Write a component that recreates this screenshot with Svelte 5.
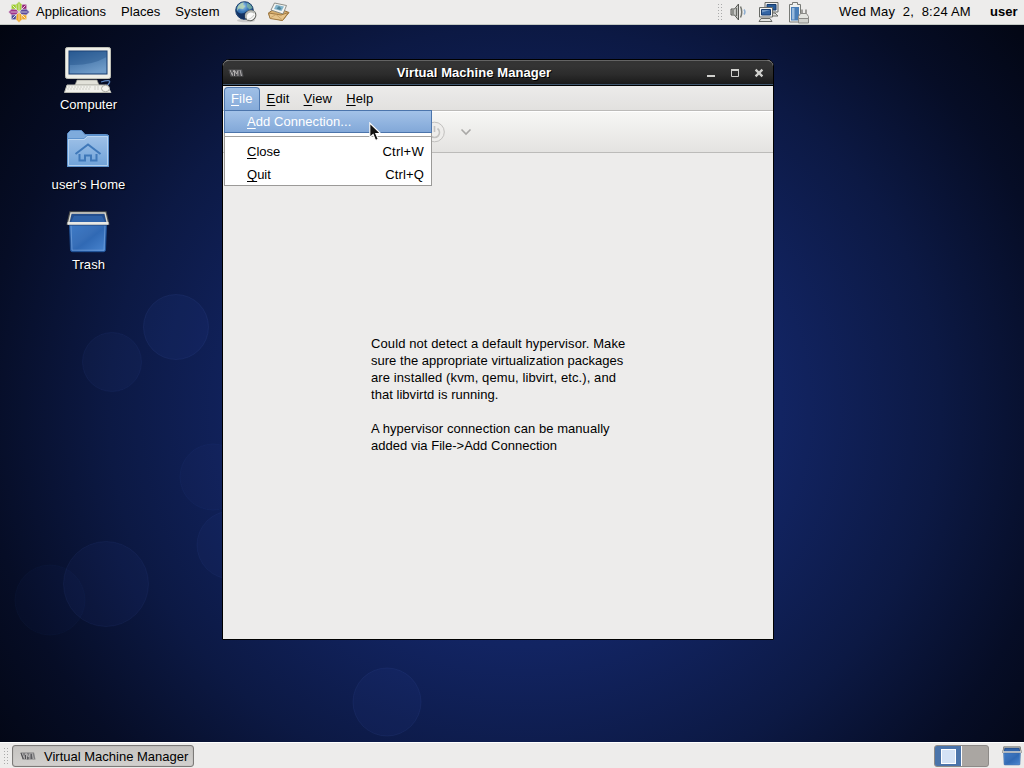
<script>
  const message = [
    { text: 'Could not detect a default hypervisor. Make', ls: 0.1 },
    { text: 'sure the appropriate virtualization packages', ls: 0.02 },
    { text: 'are installed (kvm, qemu, libvirt, etc.), and', ls: 0.1 },
    { text: 'that libvirtd is running.', ls: 0.04 },
    { text: '', ls: 0 },
    { text: 'A hypervisor connection can be manually', ls: 0.06 },
    { text: 'added via File->Add Connection', ls: 0.02 }
  ];
  const items = [
    { key: 'C', rest: 'lose', accel: 'Ctrl+W', ls: 0.25 },
    { key: 'Q', rest: 'uit', accel: 'Ctrl+Q', ls: 0.15 }
  ];
  const bokeh = [
    [176, 327, 32.5, 0.1], [112, 362, 29.5, 0.07], [213, 477, 33, 0.05], [231, 545, 34, 0.07],
    [106, 584, 42.5, 0.08], [50, 600, 35, 0.04], [387, 702, 34, 0.09]
  ];
  const petals = [0, 90, 180, 270];
  const petalColors = ['#a3cf3a', '#5a4a9c', '#efa724', '#a0348c'];
  const cornerColors = ['#932279', '#efa724', '#4b4a98', '#9ccd2a'];
</script>

{#snippet vmIcon()}
  <svg class="vm" width="16" height="10" viewBox="0 0 16 10">
    <path d="M.5 1.500H14L15.500 8.500H2.500Z" fill="#66666a" opacity=".75" />
    <path d="M2 2L4.300 7.500L6 2M6.500 8V2.500L8.800 6L10 2.500V8M12 2L13.500 8" fill="none" stroke="#b2b0b0" stroke-width="1" />
    <path d="M1 2L3.300 8M5.500 4V8M7.800 6V8.500M11.200 3V8" stroke="#4c4c50" stroke-width="1" />
  </svg>
{/snippet}

{#snippet trashIcon(w, h)}
  <svg width={w} height={h} viewBox="0 0 44 42">
    <path d="M3.500 12H40.500L39.500 39Q39.400 40.700 37.500 40.700H6.500Q4.600 40.700 4.500 39Z" fill="url(#bin)" stroke="#1f5196" />
    <path d="M5 14H39L38 39.200H6Z" fill="none" stroke="#7eaae0" stroke-width=".9" opacity=".65" />
    <path d="M4.500 1.500H39.500L42 12.500H2Z" fill="#254f8e" stroke="#4f504e" stroke-width="2.600" />
    <path d="M5 11L8 5H36L39 11Z" fill="#2f62a8" />
    <path d="M5 2H39L41.500 12.500H2.500Z" fill="none" stroke="#d9d9d4" stroke-width="1.400" />
    <path d="M1.500 12.300H42.500" stroke="#e9e9e5" stroke-width="2.800" />
    <path d="M3.500 14.400H40.500" stroke="#1c4580" stroke-width="1" opacity=".7" />
  </svg>
{/snippet}

<svg class="defs" width="0" height="0">
  <defs>
    <linearGradient id="bin" x1="0" y1="0" x2="1" y2="1">
      <stop offset="0" stop-color="#3f7cc8" /><stop offset=".45" stop-color="#386fb8" /><stop offset=".55" stop-color="#3069b4" /><stop offset="1" stop-color="#4a86d0" />
    </linearGradient>
    <linearGradient id="lcd" x1="0" y1="0" x2=".5" y2="1">
      <stop offset="0" stop-color="#2c5f98" /><stop offset="1" stop-color="#6f9bc8" />
    </linearGradient>
    <linearGradient id="folder" x1="0" y1="0" x2="0" y2="1">
      <stop offset="0" stop-color="#a0c2e8" /><stop offset="1" stop-color="#6fa2d8" />
    </linearGradient>
    <radialGradient id="globe" cx=".4" cy=".25" r=".8">
      <stop offset="0" stop-color="#a9d3f6" /><stop offset=".4" stop-color="#3b79b9" /><stop offset="1" stop-color="#102f63" />
    </radialGradient>
  </defs>
</svg>

<div class="screen">
  <header class="panel top">
    <svg class="distro" width="22" height="22" viewBox="-11 -11 22 22">
      {#each petals as a, i}
        <g transform="rotate({a})">
          <path d="M1.600 -7.400H7.400V-1.600H1.600Z" fill={cornerColors[i]} />
          <path d="M2 -2L6.500 -6.500" stroke="#f2efe9" stroke-width=".9" />
        </g>
      {/each}
      {#each petals as a, i}
        <g transform="rotate({a})">
          <path d="M0 -10.500L3 -7.500L2.500 -2.500L0 -.3L-2.500 -2.500L-3 -7.500Z" fill={petalColors[i]} stroke="#edeceb" stroke-width=".6" />
          <path d="M0 -8.500V-1" stroke="#f2efe9" stroke-width=".7" />
        </g>
      {/each}
    </svg>
    <nav class="menus"><span>Applications</span><span>Places</span><span class="sys">System</span></nav>
    <svg class="browser" width="24" height="24" viewBox="0 0 24 24">
      <ellipse cx="12" cy="20.500" rx="9" ry="1.800" fill="#888" opacity=".35" />
      <circle cx="10.500" cy="10.500" r="8.800" fill="url(#globe)" stroke="#163a68" />
      <path d="M3.500 7Q6 2.500 10 2.500L9 5L11.500 6L9 9L5 8.500L3 11Z" fill="#b9d6b0" opacity=".85" />
      <path d="M13 3Q17 4 18.500 8L15.500 9.500L13 7Z" fill="#7db4a2" opacity=".8" />
      <path d="M1.500 9Q6 17 13 11L10 19.500Q3.500 18 1.500 9Z" fill="#102a58" opacity=".85" />
      <ellipse cx="16.500" cy="15.500" rx="5.500" ry="5" fill="#fafafa" stroke="#5d5f5b" stroke-width="1" transform="rotate(-35 16.500 15.500)" />
      <path d="M12 18Q11 13 16 11.500Q19 11 20.500 13" fill="none" stroke="#b5b7b3" stroke-width="2" />
      <path d="M13 19.500Q17 19.500 20 15" fill="none" stroke="#cfd0cd" stroke-width="1.200" />
    </svg>
    <svg class="mail" width="24" height="22" viewBox="0 0 24 22">
      <path d="M1.500 12L9 6.500L22 11.500L15.500 19.500L3 16.500Z" fill="#d6ad6e" stroke="#94703c" />
      <path d="M7.500 2L19.500 4.500L16 13L4 9Z" fill="#f4f5f2" stroke="#81837e" stroke-width=".9" />
      <path d="M9 3.800L17 5.500L14.500 10L7 8Z" fill="#83b4cc" />
      <path d="M9.500 7.500L12 5L14.500 7.500L13 9Z" fill="#4f8398" />
      <path d="M1.500 12L14 14L21.500 11.500L15.500 19.500L3 17.500Z" fill="#e6c48b" stroke="#a07a42" />
      <path d="M3 17L9 13.500L15.500 19" fill="none" stroke="#c49c60" stroke-width=".8" />
    </svg>
    <div class="tray">
      <i class="grip"></i>
      <svg class="sound" width="17" height="20" viewBox="0 0 17 20">
        <path d="M1 7H4.500L8.500 2V18L4.500 13H1Z" fill="#c8c9c6" stroke="#555753" />
        <path d="M3 8V12M6.500 6V14" stroke="#686a66" stroke-width="1.200" />
        <path d="M10.500 4.500Q13 10 10.500 15.500" fill="none" stroke="#74766f" stroke-width="1.500" />
        <path d="M14 7.500Q16 10 14 12.500" fill="none" stroke="#8eaed0" stroke-width="1.400" />
      </svg>
      <svg class="net" width="22" height="22" viewBox="0 0 22 22">
        <g stroke="#686a66"><path d="M7 1.500H20V11H7Z" fill="#eee" /><path d="M10 15L12 12H17L20 15Z" fill="#ddd" /></g>
        <path d="M9 3.500H18V9H9Z" fill="#285b98" stroke="#143b6c" />
        <g stroke="#686a66"><path d="M1.500 6.500H14.500V16H1.500Z" fill="#f2f2ef" /><path d="M1 20.500L3 17.500H12L14 20.500Z" fill="#e6e6e3" /></g>
        <path d="M3.500 8.500H12.500V14H3.500Z" fill="#3465a4" stroke="#173d72" /><path d="M4 9H12L4 11.500Z" fill="#7198c6" />
      </svg>
      <svg class="battery" width="22" height="23" viewBox="0 0 22 23">
        <path d="M1.500 3.500H4.500V1.500H9.500V3.500H12.500V21H1.500Z" fill="#eef0ef" stroke="#787a76" />
        <path d="M3 6H11V19.500H3Z" fill="#497eb7" /><path d="M4 7H6.500V18.500H4Z" fill="#99bbdd" />
        <path d="M14 8.500V13M18 8.500V13" stroke="#8a8a87" stroke-width="1.600" />
        <path d="M10.500 19V15.500L12.500 12.500H18.500L20.500 15.500V19Z" fill="#e3e4e0" stroke="#8a8a87" />
        <path d="M10.500 17.500H20.500V22H10.500Z" fill="#cfd0cc" stroke="#8a8a87" />
      </svg>
      <time>Wed May&nbsp; 2,&nbsp; 8:24 AM</time>
      <b>user</b>
    </div>
  </header>

  <main class="desktop">
    <svg class="lights" width="1024" height="718" viewBox="0 25 1024 718">
      {#each bokeh as [x, y, r, o]}
        <circle cx={x} cy={y} r={r} fill="#3450b0" fill-opacity={o} stroke="#5878ce" stroke-opacity={o} />
      {/each}
    </svg>
    <div class="shortcuts">
      <div class="shortcut">
        <svg width="50" height="48" viewBox="0 0 50 48">
          <path d="M38 36Q48 33 46.500 36.500T41 41" fill="none" stroke="#5e87bf" stroke-width="1.300" />
          <path d="M14 34H34L36 39H12Z" fill="#e2e2da" stroke="#92938a" stroke-width=".7" />
          <rect x="2.500" y="1.500" width="45" height="31" rx="1.800" fill="#efefe9" stroke="#bfc0b7" />
          <rect x="6" y="5" width="38" height="23" fill="url(#lcd)" stroke="#173b6f" />
          <path d="M6.500 19Q28 20 43.500 11V5.500H6.500Z" fill="#204f86" opacity=".4" />
          <path d="M4 39H44L48 46.500H1.500Z" fill="#f1f1ec" stroke="#babbb2" />
          <path d="M5 41H28M4 43H28M31 41H36M31 43H37" stroke="#cfd0c8" stroke-width="1.200" stroke-dasharray="2 1" />
          <ellipse cx="42.500" cy="42.500" rx="4" ry="3.200" fill="#f5f5f0" stroke="#adaea6" />
        </svg>
        <span>Computer</span>
      </div>
      <div class="shortcut home">
        <svg width="50" height="48" viewBox="0 0 50 48">
          <path d="M4.500 11V7.500L7.500 4.500H18.500L22 8.500H43.500Q45.500 8.500 45.500 10.500V40.500H4.500Z" fill="#7eabdc" stroke="#5d8fc9" />
          <path d="M4.500 12.500H21L24 9.500H45.500V40.500H4.500Z" fill="url(#folder)" stroke="#5d92cd" />
          <path d="M5.500 13.500H21.500L24.500 10.500H44.500V39.500H5.500Z" fill="none" stroke="#c3daf2" stroke-width=".8" />
          <path d="M12.500 28L25 18.500L37.500 28M16.500 28V34.500H22V29.500H28V34.500H33.500V28" fill="none" stroke="#3f78b9" stroke-width="2" />
        </svg>
        <span>user's Home</span>
      </div>
      <div class="shortcut trash">
        {@render trashIcon(44, 42)}
        <span>Trash</span>
      </div>
    </div>

    <section class="window">
      <div class="title">
        {@render vmIcon()}
        <h1>Virtual Machine Manager</h1>
        <svg class="controls" width="60" height="12" viewBox="0 0 60 12">
          <path d="M2 9H10" stroke="#d0d0cd" stroke-width="2" />
          <path d="M26.500 3.500H33.500V9.500H26.500Z" fill="none" stroke="#d0d0cd" /><path d="M26 3H34" stroke="#d0d0cd" stroke-width="2" />
          <path d="M50.600 2.600L57.400 9.400M57.400 2.600L50.600 9.400" stroke="#d0d0cd" stroke-width="2.300" />
        </svg>
      </div>
      <nav class="menubar">
        <span class="open"><u>F</u>ile</span><span><u>E</u>dit</span><span><u>V</u>iew</span><span><u>H</u>elp</span>
      </nav>
      <div class="toolbar">
        <svg width="60" height="24" viewBox="0 0 60 24">
          <circle cx="12.500" cy="12" r="9.800" fill="#eeedeb" stroke="#c1c0be" />
          <path d="M9.500 8.500A5 5 0 1 0 15.500 8.500M12.500 6V12" fill="none" stroke="#c4c3c1" stroke-width="1.600" />
          <path d="M39.500 9.500L44 14L48.500 9.500" fill="none" stroke="#a9a8a6" stroke-width="1.600" />
        </svg>
      </div>
      <div class="content">
        <p>
          {#each message as line}<span style="letter-spacing:{line.ls}px">{line.text}</span>{/each}
        </p>
      </div>
      <div class="dropdown">
        <div class="item active"><span><u>A</u>dd Connection...</span></div>
        <hr />
        {#each items as it}
          <div class="item"><span><u>{it.key}</u>{it.rest}</span><span style="letter-spacing:{it.ls}px">{it.accel}</span></div>
        {/each}
      </div>
      <svg class="cursor" width="14" height="20" viewBox="0 0 14 20">
        <path d="M.8 1V15.500L4.100 12.400L6.500 18.500L9.300 17.300L6.800 11.500H11.600Z" fill="#111" stroke="#fff" stroke-width="1.100" />
      </svg>
    </section>
  </main>

  <footer class="panel bottom">
    <i class="grip"></i>
    <div class="task">{@render vmIcon()}<span>Virtual Machine Manager</span></div>
    <div class="pager"><div class="ws on"><i></i></div><div class="ws"></div></div>
    {@render trashIcon(20, 20)}
  </footer>
</div>

<style>
  :global(body) { overflow: hidden; }
  .defs { position: absolute; }
  .screen { width: 1024px; height: 768px; display: grid; grid-template-rows: 25px 717px 26px; font: 13px/17px "Liberation Sans", Arial, sans-serif; color: #000; overflow: hidden; }
  svg { display: block; flex: none; }
  .panel { display: flex; align-items: center; background: #edeceb; box-sizing: border-box; }
  .top { border-bottom: 1px solid #c4c9c4; padding-left: 8px; }
  .menus { display: flex; gap: 15px; margin-left: 6px; padding-bottom: 2px; }
  .sys { letter-spacing: .2px; }
  .browser { margin-left: 14px; }
  .mail { margin-left: 9px; }
  .tray { margin-left: auto; display: flex; align-items: center; }
  .grip { width: 7px; height: 18px; background: radial-gradient(circle, #aaa 0 .6px, transparent .8px) 0 0 / 3px 3px; }
  .sound { margin-left: 6px; }
  .net { margin-left: 11px; }
  .battery { margin-left: 8px; }
  time { margin-left: 29px; width: 133px; white-space: nowrap; letter-spacing: .21px; padding-bottom: 2px; }
  .tray b { margin-left: 18px; width: 34px; padding-bottom: 2px; }

  .desktop { position: relative; overflow: hidden; background: radial-gradient(ellipse 640px 590px at 525px 385px, #172f76 0, #122462 40%, #0c1944 65%, #060d26 85%, #020510 105%); }
  .lights { position: absolute; left: 0; top: 0; }
  .shortcuts { position: relative; width: 177px; padding-top: 21px; display: flex; flex-direction: column; }
  .shortcut { height: 80px; display: flex; flex-direction: column; align-items: center; color: #fff; text-shadow: 1px 1px 1px #000; }
  .shortcut svg { margin-right: 1px; }
  .shortcut span { margin-top: 2px; }
  .home span { letter-spacing: .12px; }
  .trash svg { margin-top: 5px; margin-right: 2px; }
  .trash span { margin-top: 3px; letter-spacing: .1px; }

  .window { position: absolute; left: 222px; top: 34px; width: 552px; height: 581px; box-sizing: border-box; border: 1px solid #000; border-radius: 7px 7px 0 0; background: #edeceb; display: flex; flex-direction: column; }
  .title { height: 26px; box-sizing: border-box; border-top: 1px solid #646464; border-bottom: 1px solid #000; border-radius: 6px 6px 0 0; background: linear-gradient(#343434 0 20%, #2c2c2c 55%, #1b1b1b 94%, #40566d 95%); display: flex; align-items: center; padding: 0 0 1px 5px; }
  h1 { flex: 1; margin: 0 0 0 -1px; font-size: 13px; line-height: 17px; text-align: center; color: #fff; text-shadow: 1px 1px 0 #000; letter-spacing: .06px; }
  .controls { margin-right: 8px; }
  .menubar { height: 24px; border-bottom: 1px solid #bcbbb9; background: linear-gradient(#ecebea, #e2e1df); display: flex; box-sizing: content-box; padding-left: 1px; }
  .menubar span { padding: 4px 7px 0; box-sizing: border-box; letter-spacing: .15px; }
  .menubar .open { margin-top: 1px; padding: 2px 6px 0; border: 1px solid #4f78af; border-bottom: 0; border-radius: 4px 4px 0 0; background: linear-gradient(#9fbfe6, #86abd9); color: #fff; }
  u { text-decoration-thickness: 1px; text-underline-offset: 2px; text-decoration-skip-ink: none; }
  .toolbar { height: 41px; border-bottom: 1px solid #bcbbb9; background: linear-gradient(#f7f7f5, #e4e3e1); box-shadow: inset 0 1px #fff; display: flex; align-items: center; padding-left: 199px; }
  .content { flex: 1; padding: 182px 0 0 148px; }
  p { margin: 0; display: flex; flex-direction: column; white-space: nowrap; }
  p span { height: 17px; }

  .dropdown { position: absolute; left: 1px; top: 50px; width: 208px; height: 76px; box-sizing: border-box; border: 1px solid #9b9a98; background: #fff; }
  .item { display: flex; justify-content: space-between; height: 23px; line-height: 23px; padding: 0 7px 0 22px; }
  .active { margin: -1px -1px 0; border: 1px solid #4c75ac; height: 21px; line-height: 22px; background: linear-gradient(#a3c2e8, #82a8d8); color: #fff; letter-spacing: .06px; }
  hr { margin: 3px 0; border: 0; height: 1px; background: #a3a2a0; }
  .cursor { position: absolute; left: 146px; top: 62px; }

  .bottom { border-top: 1px solid #fff; padding: 1px 2px 0 3px; }
  .task { margin-left: 2px; width: 182px; height: 22px; box-sizing: border-box; border: 1px solid #7c7a78; border-radius: 3px; background: linear-gradient(#c5c3c0, #d2d0ce); box-shadow: inset 0 0 1px #888; display: flex; align-items: center; padding-left: 7px; white-space: nowrap; }
  .task span { margin-left: 8px; }
  .pager { margin-left: auto; margin-right: 13px; width: 55px; height: 22px; box-sizing: border-box; display: flex; border: 1px solid #8d8a87; border-radius: 3px; overflow: hidden; background: #aaa6a2; }
  .ws { flex: 1; display: flex; align-items: center; justify-content: center; }
  .on { background: #4b74aa; border-right: 1px solid #fff; }
  .ws i { width: 13px; height: 13px; background: #d4e2f5; border: 1px solid #fff; }
</style>
